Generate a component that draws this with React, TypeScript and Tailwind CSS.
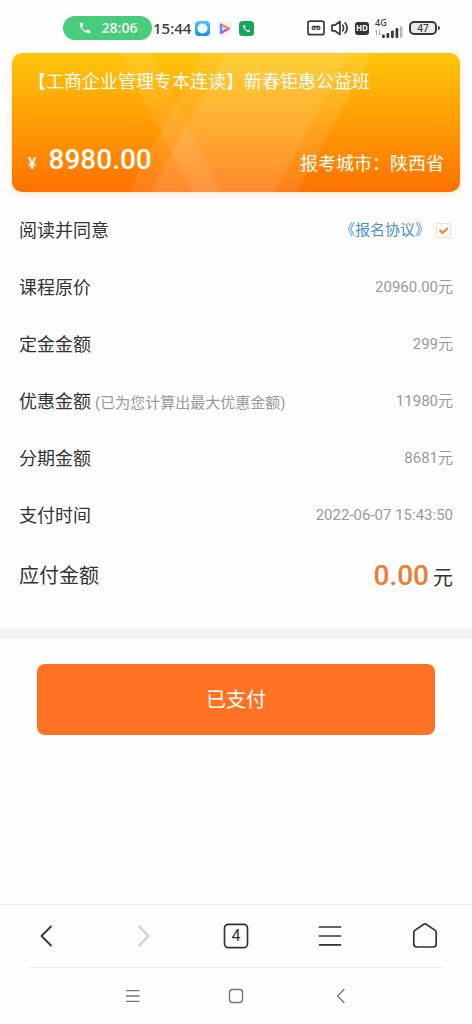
import { useState } from "react";

const rows = [
  { label: "课程原价", value: "20960.00元" },
  { label: "定金金额", value: "299元" },
  { label: "优惠金额", note: "(已为您计算出最大优惠金额)", value: "11980元" },
  { label: "分期金额", value: "8681元" },
  { label: "支付时间", value: "2022-06-07 15:43:50" },
];

const PHONE =
  "M6.6 10.8c1.4 2.8 3.8 5.1 6.6 6.6l2.2-2.2c.3-.3.7-.4 1-.2 1.1.4 2.3.6 3.6.6.6 0 1 .4 1 1V20c0 .6-.4 1-1 1C10.6 21 3 13.4 3 4c0-.6.4-1 1-1h3.500c.6 0 1 .4 1 1 0 1.2.2 2.4.6 3.6.1.3 0 .7-.2 1z";

function StatusBar() {
  return (
    <header className="flex items-center justify-between pt-4 pb-[13px] pl-[63px] pr-8 font-['Noto_Sans','Noto_Sans_CJK_SC',sans-serif] text-[#3a3a3a]">
      <div className="flex items-center">
        <div className="flex h-6 w-[89px] items-center justify-center gap-2.5 rounded-full bg-[#47cd7c] text-sm font-medium text-white">
          <svg className="size-3.5" viewBox="0 0 24 24" fill="currentColor">
            <path d={PHONE} />
          </svg>
          28:06
        </div>
        <span className="ml-px text-[15px] leading-6 font-medium">15:44</span>

        {/* notification icons */}
        <div className="ml-1 flex items-center gap-[7px]">
          <svg className="size-[15px]" viewBox="0 0 15 15">
            <defs>
              <linearGradient id="blue" x1="0" y1="0" x2="0" y2="1">
                <stop offset="0" stopColor="#4cc6fb" />
                <stop offset="1" stopColor="#148df0" />
              </linearGradient>
            </defs>
            <rect width="15" height="15" rx="4" fill="url(#blue)" />
            <circle cx="7.5" cy="7.5" r="5" fill="#f2fbff" />
          </svg>
          <svg className="size-[15px]" viewBox="0 0 15 15">
            <rect width="15" height="15" rx="4" fill="#f4f4f6" />
            <path d="M4 3.300v8.700l8-4.500z" fill="#ddd0f5" />
            <path d="M4 12l7.800-4.500" stroke="#a15cf0" strokeWidth="2.200" strokeLinecap="round" />
            <path d="M4 3.300l7.800 4.200" stroke="#f0883c" strokeWidth="2" strokeLinecap="round" />
            <path d="M3.900 3.600v7.400" stroke="#4a8df5" strokeWidth="2" strokeLinecap="round" />
          </svg>
          <svg className="size-[15px]" viewBox="0 0 15 15">
            <rect width="15" height="15" rx="3.5" fill="#17a65b" />
            <path d={PHONE} fill="#fff" transform="translate(3 3) scale(.38)" />
          </svg>
        </div>
      </div>

      <div className="flex items-center gap-1.5">
        {/* voicemail */}
        <svg className="h-4 w-[18px]" viewBox="0 0 18 16" fill="none" stroke="currentColor">
          <rect x="1" y="1.2" width="16" height="13.5" rx="2" strokeWidth="1.7" />
          <circle cx="6.6" cy="8" r="1.5" strokeWidth="1.3" />
          <circle cx="11.4" cy="8" r="1.5" strokeWidth="1.3" />
          <path d="M5.500 6.400h7" strokeWidth="1.100" />
        </svg>
        <svg className="h-4 w-[18px]" viewBox="0 0 18 16" fill="none" stroke="currentColor" strokeWidth="1.7" strokeLinejoin="round" strokeLinecap="round">
          <path d="M1 5.200h2.800L9 1.500v13l-5.200-3.700H1z" />
          <path d="M11.700 5.200q1.800 2.800 0 5.600M14.200 3q4 5 0 10" />
        </svg>
        <span className="flex h-[13px] w-3.5 items-center justify-center rounded-[3px] bg-[#333] text-[8px] leading-none font-bold text-white">
          HD
        </span>
        <div className="flex h-5 w-7 flex-col">
          <span className="text-[9px] leading-[10px] font-medium">4G</span>
          <svg className="-mt-0.5 h-3 w-7" viewBox="0 0 28 12" fill="currentColor">
            <path d="M0.500 5.500l1-1.500v5M4.500 4v5l1-1.500" fill="none" stroke="#aaa" />
            <rect x="7" y="8.5" width="2.8" height="3.5" rx="1" />
            <rect x="11.5" y="7" width="2.8" height="5" rx="1" />
            <rect x="16" y="4.5" width="2.8" height="7.5" rx="1" />
            <rect x="20.500" y="2" width="2.8" height="10" rx="1" />
            <rect x="25" y="0" width="2.4" height="12" rx="1" fill="#b8b8b8" />
          </svg>
        </div>
        <div className="flex items-center gap-px">
          <span className="flex h-3.5 w-7 items-center justify-center rounded-[5px] border-2 border-current bg-[#ececec] text-[10px] leading-none font-medium">
            47
          </span>
          <span className="h-1 w-0.5 rounded-r bg-current" />
        </div>
      </div>
    </header>
  );
}

function CourseCard() {
  return (
    <section className="relative mx-3 flex h-[139px] flex-col justify-between overflow-hidden rounded-[10px] bg-linear-to-b from-[#fdc60b] to-[#ff7000] px-4 pt-[15px] pb-3.5 text-white shadow-[0_2px_10px_rgba(255,150,40,0.22)]">
      <svg className="absolute inset-0 h-full w-full" viewBox="0 0 448 139" preserveAspectRatio="none" fill="#fff">
        <path d="M107 0h32l71 139h-30z" fillOpacity=".08" />
        <path d="M191 0h146l-74 139H116z" fillOpacity=".09" />
        <path d="M214 0h146l-75 139H138z" fillOpacity=".1" />
      </svg>
      <h1 className="relative text-lg leading-7 whitespace-nowrap">【工商企业管理专本连读】新春钜惠公益班</h1>
      <div className="relative flex items-end justify-between">
        <div className="flex items-baseline gap-3 font-medium">
          <span className="text-base">¥</span>
          <span className="text-[28px] leading-9">8980.00</span>
        </div>
        <span className="text-lg leading-7">报考城市：陕西省</span>
      </div>
    </section>
  );
}

export default function App() {
  const [agreed, setAgreed] = useState(true);

  return (
    <div className="flex min-h-screen flex-col bg-[#fefefe] font-[Roboto,'Noto_Sans_CJK_SC',sans-serif] text-[#333]">
      <StatusBar />

      <main className="flex-1">
        <CourseCard />

        <div className="px-[19px] pt-2.5 pb-[19px]">
          {/* AGREEMENT */}
          <div className="flex h-[57px] items-center justify-between">
            <label htmlFor="agree" className="text-lg">
              阅读并同意
            </label>
            <div className="flex items-center gap-1.5 pr-0.5">
              <a href="#agreement" className="text-[15px] text-[#4b8fc9]">
                《报名协议》
              </a>
              <span className="relative flex size-[15px]">
                <input
                  id="agree"
                  type="checkbox"
                  checked={agreed}
                  onChange={(e) => setAgreed(e.target.checked)}
                  className="size-[15px] appearance-none border border-[#fbdcc4] bg-white"
                />
                {agreed && (
                  <svg className="pointer-events-none absolute inset-0" viewBox="0 0 15 15" fill="none" stroke="#f5821f" strokeWidth="2">
                    <path d="M3.500 7l3 3L12 5" />
                  </svg>
                )}
              </span>
            </div>
          </div>

          {/* AMOUNTS */}
          <dl>
            {rows.map((r) => (
              <div key={r.label} className="flex h-[57px] items-center justify-between">
                <dt className="text-lg">
                  {r.label}
                  {r.note && <span className="ml-1 text-[15px] text-[#999]">{r.note}</span>}
                </dt>
                <dd className="text-[15px] text-[#999]">{r.value}</dd>
              </div>
            ))}
            <div className="flex h-16 items-center justify-between text-xl">
              <dt>应付金额</dt>
              <dd className="flex items-baseline gap-1">
                <span className="text-[28px] leading-9 font-medium text-[#f47a30]">0.00</span>元
              </dd>
            </div>
          </dl>
        </div>

        <div className="h-3 bg-[#f4f4f4]" />

        <div className="px-[37px] pt-[25px]">
          <button className="h-[71px] w-full rounded-lg bg-[#ff7224] text-xl text-white">已支付</button>
        </div>
      </main>

      {/* BROWSER TOOLBAR */}
      <nav className="grid h-[63px] grid-cols-5 place-items-center border-t border-[#ededed]">
        <button aria-label="后退">
          <svg className="size-7" viewBox="0 0 28 28" fill="none" stroke="#333" strokeWidth="1.800" strokeLinecap="round" strokeLinejoin="round">
            <path d="M18 4.500L8.500 14l9.500 9.500" />
          </svg>
        </button>
        <button aria-label="前进">
          <svg className="size-7" viewBox="0 0 28 28" fill="none" stroke="#ccc" strokeWidth="1.800" strokeLinecap="round" strokeLinejoin="round">
            <path d="M11 4.500l9.500 9.500-9.500 9.500" />
          </svg>
        </button>
        <button className="relative flex size-7 items-center justify-center text-base leading-none">
          <svg className="absolute inset-0" viewBox="0 0 28 28" fill="none" stroke="#333" strokeWidth="1.700">
            <rect x="2.500" y="2.300" width="23" height="23.400" rx="4" />
          </svg>
          4
        </button>
        <button aria-label="菜单">
          <svg className="size-7" viewBox="0 0 28 28" fill="none" stroke="#333" strokeWidth="1.700" strokeLinecap="round">
            <path d="M3.500 5h21M3.500 14h21M3.500 22.800h21" />
          </svg>
        </button>
        <button aria-label="主页">
          <svg className="size-7" viewBox="0 0 28 28" fill="none" stroke="#333" strokeWidth="1.700" strokeLinejoin="round">
            <path d="M12.800 2.200q1.200-.8 2.400 0l9 6.200q1 .7 1 2V22q0 3-3 3H5.800q-3 0-3-3V10.400q0-1.300 1-2z" />
          </svg>
        </button>
      </nav>

      {/* SYSTEM NAVIGATION */}
      <nav className="mx-7 grid h-[57px] grid-cols-3 place-items-center border-t border-[#ededed] px-[52px]">
        <button aria-label="最近任务">
          <svg className="size-4" viewBox="0 0 16 16" stroke="#777" strokeWidth="1.300" strokeLinecap="round">
            <path d="M2.500 2.700H15M2.500 8H15M2.500 13.300H15" />
          </svg>
        </button>
        <button aria-label="桌面">
          <svg className="size-4" viewBox="0 0 16 16" fill="none" stroke="#777" strokeWidth="1.400">
            <rect x="1.500" y="1.500" width="13" height="13" rx="3" />
          </svg>
        </button>
        <button aria-label="返回">
          <svg className="size-4" viewBox="0 0 16 16" fill="none" stroke="#777" strokeWidth="1.400" strokeLinecap="round" strokeLinejoin="round">
            <path d="M12 1.500L5.500 8l6.500 6.500" />
          </svg>
        </button>
      </nav>
    </div>
  );
}
